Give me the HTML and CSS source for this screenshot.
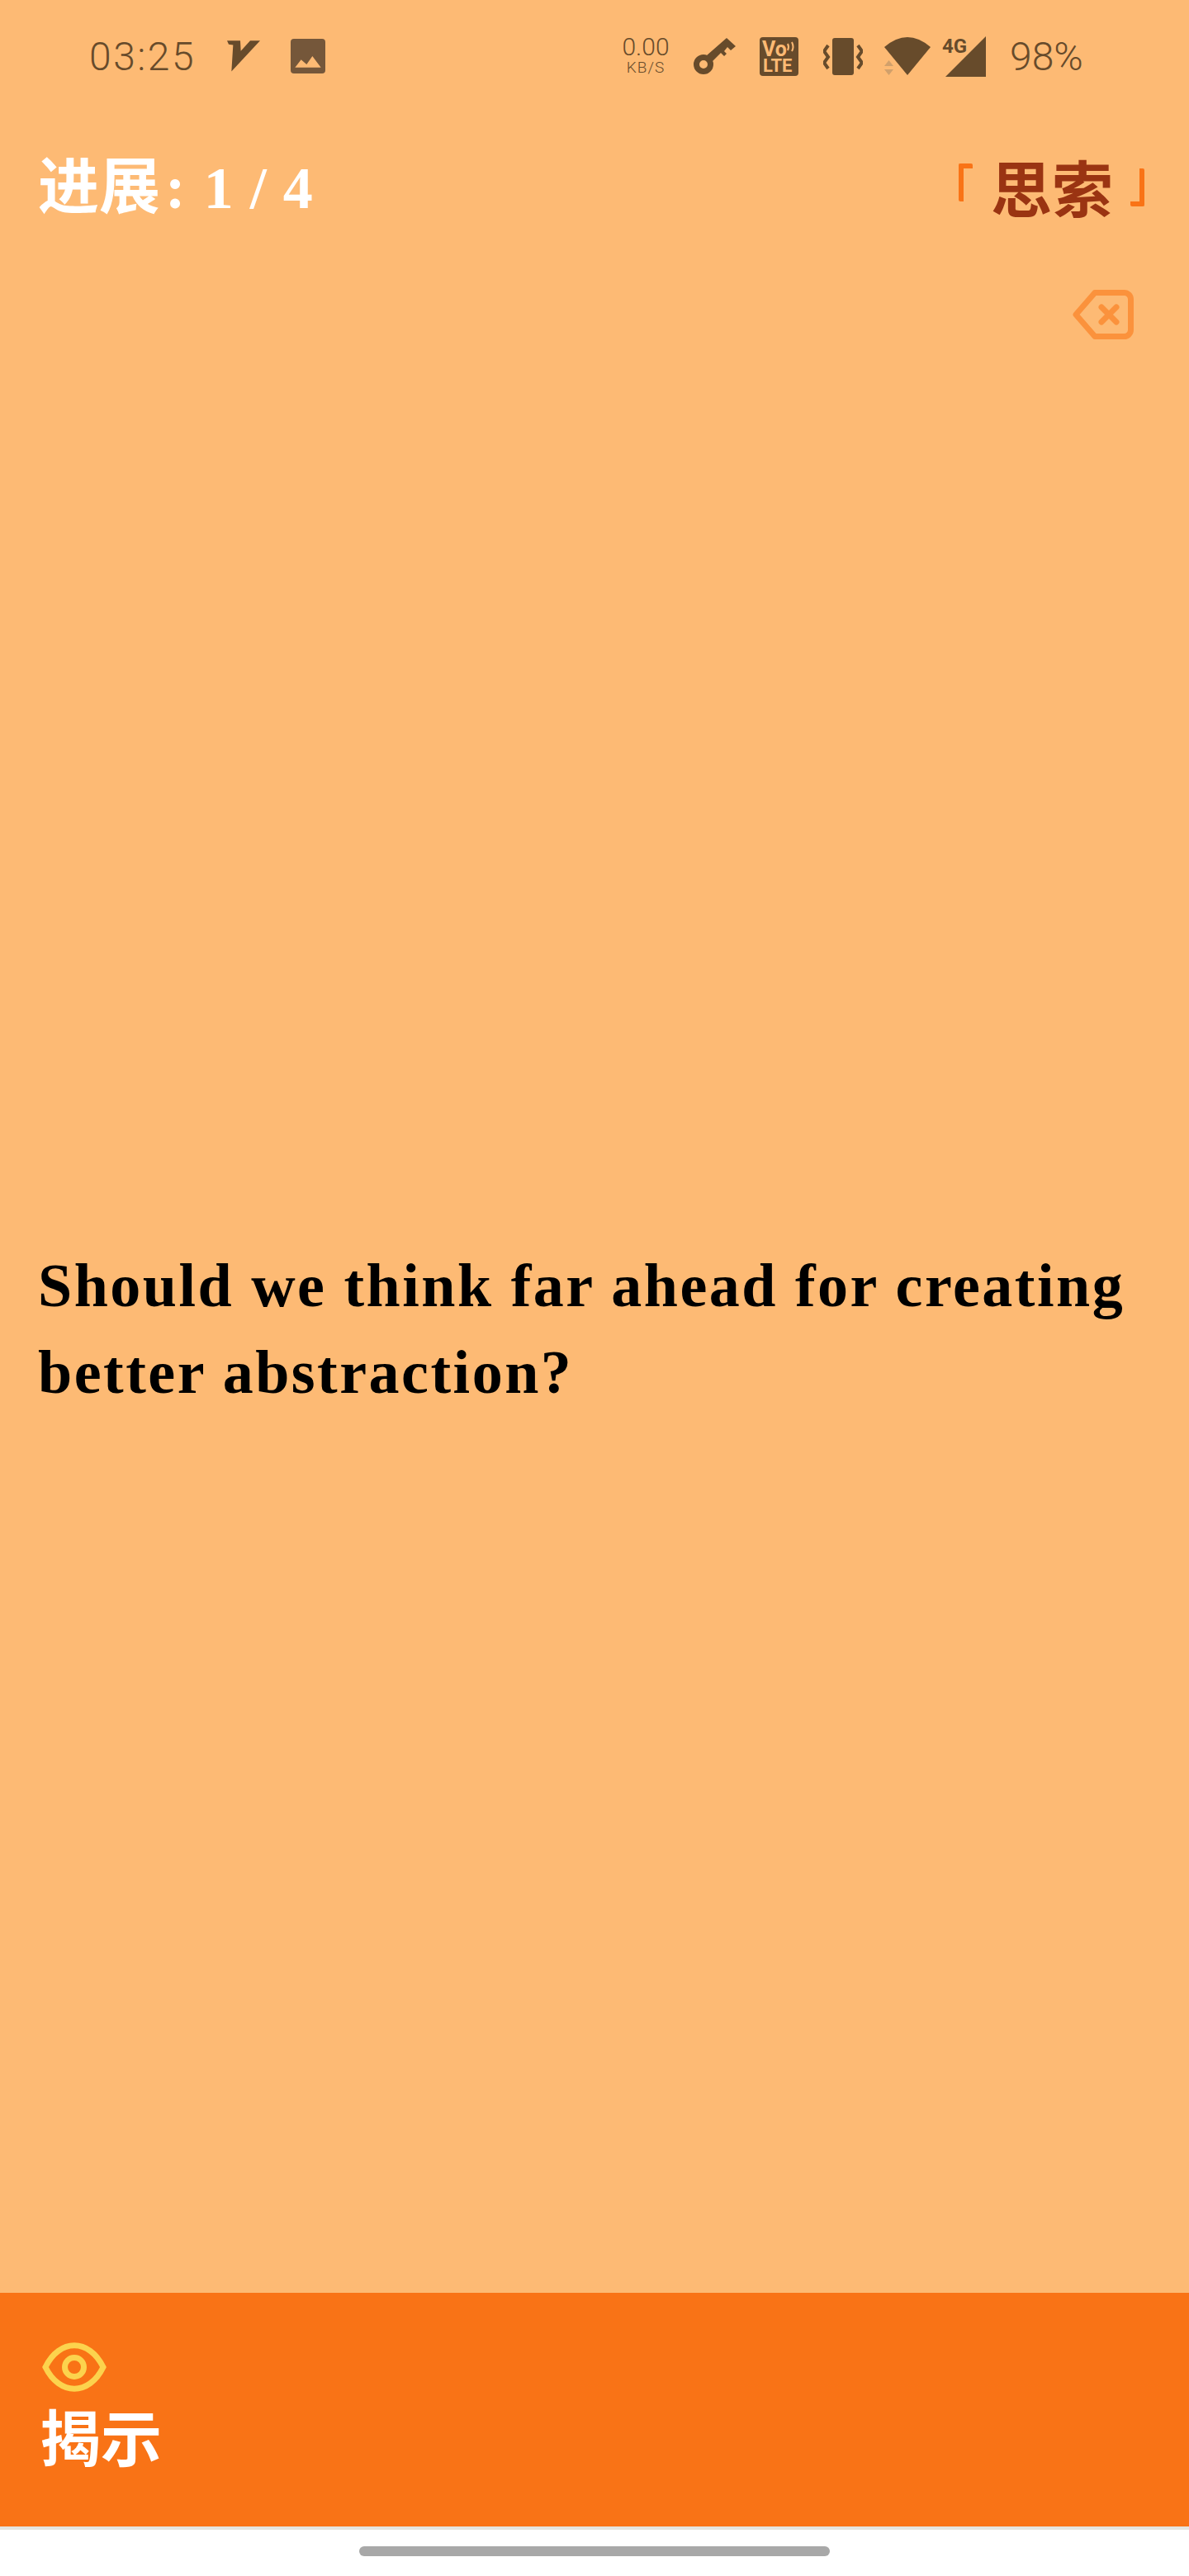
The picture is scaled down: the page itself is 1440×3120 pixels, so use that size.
FILE: index.html
```html
<!DOCTYPE html>
<html lang="zh">
<head>
    <meta charset="utf-8">
    <title>思索</title>
    <link rel="stylesheet" href="styles.css">
</head>
<body>
    <div class="screen">
        <div class="status">
            <span class="time">03:25</span>
            <svg class="ic-v" width="40" height="38" viewBox="556 60 120 113"><polygon points="556,60 604,60 606,98 640,60 676,60 572,172 578,76 562,74"/></svg>
            <svg class="ic-pic" width="42" height="42" viewBox="0 0 126 126"><rect width="126" height="126" rx="12"/><polygon class="cut" points="16,104 38,76 58,93 79,63 110,104"/></svg>
            <div class="speed">
                <span class="speed-num">0.00</span>
                <span class="speed-unit">KB/S</span>
            </div>
            <svg class="ic-key" width="51" height="44" viewBox="840 47 51 44"><circle class="ring" cx="852" cy="79" r="8.500"/><polygon points="856,68 880,47 891,57 885,62 881,58 877,63 880,66 877,69 873,65 863,75"/></svg>
            <svg class="ic-volte" width="47" height="47" viewBox="0 0 47 47"><rect width="47" height="47" rx="4"/><text class="volte"><tspan class="volte-a" x="3" y="23">Vo</tspan><tspan class="volte-b" x="4" y="42">LTE</tspan></text><path class="cut-line" d="M34 8q2 4 0 8M39 6q3 6 0 11"/></svg>
            <svg class="ic-vib" width="48" height="46" viewBox="996 46 48 46"><rect x="1007" y="47" width="26" height="45" rx="3"/><polyline class="wave" points="1002,56 997,63 1002,70 997,77 1002,84"/><polyline class="wave" points="1038,56 1043,63 1038,70 1043,77 1038,84"/></svg>
            <svg class="ic-wifi" width="56" height="46" viewBox="1070 45 56 46"><path d="M1070 57Q1098 33 1126 57L1098 91Z"/><polygon class="faint" points="1075.500,73 1081,80 1070,80"/><polygon class="faint" points="1070,84 1081,84 1075.500,91"/></svg>
            <div class="signal">
                <svg width="54" height="49" viewBox="1140 43 54 49"><polygon points="1193,43 1193,92 1144,92"/></svg>
                <span class="net">4G</span>
            </div>
            <span class="battery">98%</span>
        </div>

        <div class="top">
            <div class="progress">进展<span class="colon">:</span><span class="count">1 / 4</span></div>
            <div class="tag">
                <span class="br-left"></span>
                <span class="tag-text">思索</span>
                <span class="br-right"></span>
            </div>
        </div>

        <div class="actions">
            <svg class="ic-back" width="75" height="60" viewBox="1298 351 75 60"><path d="M1303 381L1326 354.500H1361.500a8 8 0 0 1 8 8V399.500a8 8 0 0 1-8 8H1326Z"/><path d="M1334 372L1352 390M1352 372L1334 390"/></svg>
        </div>

        <div class="main">
            <p class="question">Should we think far ahead for creating better abstraction?</p>
        </div>

        <div class="footer">
            <svg class="ic-eye" width="78" height="60" viewBox="51 2837 78 60"><path d="M55 2867C72 2832 108 2832 125 2867C108 2902 72 2902 55 2867Z"/><circle cx="90" cy="2867" r="11.500"/></svg>
            <div class="reveal">揭示</div>
        </div>

        <div class="nav"><span class="pill"></span></div>
    </div>
</body>
</html>
```
FILE: styles.css
```css
* {
    box-sizing: border-box;
}
body {
    margin: 0;
    background-color: #fdba74;
    font-family: "Liberation Serif", "Noto Sans CJK SC", serif;
}
.screen {
    display: flex;
    flex-direction: column;
    height: 3120px;
}

/* status bar */
.status {
    display: flex;
    align-items: center;
    height: 136px;
    padding-left: 108px;
    color: #674b2b;
    font-family: Roboto, sans-serif;
    font-weight: 300;
}
.status svg {
    display: block;
    flex: none;
    fill: #674b2b;
}
.time {
    width: 128px;
    font-size: 48px;
    letter-spacing: 2.500px;
}
.ic-v {
    margin-left: 39px;
}
.status .ic-pic {
    margin-left: 37px;
    fill: #75573a;
}
.cut {
    fill: #fdba74;
}
.speed {
    display: flex;
    flex-direction: column;
    align-items: center;
    width: 56px;
    margin-left: 360px;
}
.speed-num {
    font-size: 30px;
    line-height: 28px;
}
.speed-unit {
    font-size: 19px;
    line-height: 22px;
    letter-spacing: 1px;
}
.ic-key {
    margin-left: 30px;
}
.status .ring {
    fill: none;
    stroke: #674b2b;
    stroke-width: 7;
}
.ic-volte {
    margin-left: 29px;
}
.status .volte {
    fill: #fdba74;
    font-family: Roboto, sans-serif;
    font-weight: 700;
}
.volte-a {
    font-size: 25px;
}
.volte-b {
    font-size: 22px;
}
.status .cut-line {
    fill: none;
    stroke: #fdba74;
    stroke-width: 2;
}
.ic-vib {
    margin-left: 30px;
}
.status .wave {
    fill: none;
    stroke: #674b2b;
    stroke-width: 4;
}
.ic-wifi {
    margin-left: 26px;
}
.status .faint {
    fill: #d1a06b;
}
.signal {
    position: relative;
    margin-left: 14px;
}
.net {
    position: absolute;
    top: -2px;
    left: 0;
    font-size: 24px;
    font-weight: 700;
    line-height: 28px;
}
.battery {
    margin-left: 28px;
    font-size: 48px;
}

/* header */
.top {
    display: flex;
    justify-content: space-between;
    align-items: center;
    height: 176px;
    padding: 0 54px 0 46px;
}
.progress {
    display: flex;
    align-items: baseline;
    margin-top: -10px;
    color: #fff;
    font-size: 74px;
    font-weight: 700;
    white-space: nowrap;
}
.colon {
    margin-left: 6px;
}
.count {
    margin-left: 22px;
    font-size: 72px;
    letter-spacing: 1px;
}
.tag {
    display: flex;
    align-items: center;
}
.tag-text {
    margin: 0 21px 0 22px;
    color: #9a3412;
    font-size: 74px;
    font-weight: 700;
}
.br-left,
.br-right {
    display: block;
    width: 17px;
    height: 46px;
    border: 0 solid #f97316;
    border-radius: 2px;
}
.br-left {
    margin-top: -6px;
    border-width: 6px 0 0 6px;
}
.br-right {
    margin-top: 6px;
    border-width: 0 6px 6px 0;
}

/* delete icon */
.actions {
    display: flex;
    justify-content: flex-end;
    height: 131px;
    padding: 39px 67px 0 0;
}
.ic-back {
    display: block;
    fill: none;
    stroke: #fb923c;
    stroke-width: 7;
    stroke-linejoin: round;
    stroke-linecap: round;
}

/* question */
.main {
    flex: 1;
    display: flex;
    align-items: center;
    padding: 0 46px;
}
.question {
    margin: 0;
    color: #000;
    font-size: 74px;
    font-weight: 700;
    line-height: 105px;
    letter-spacing: 2.500px;
}

/* bottom bar */
.footer {
    height: 287px;
    padding: 60px 48px 0;
    background-color: #f97316;
    border-bottom: 4px solid #e5e5e0;
}
.ic-eye {
    display: block;
    margin-left: 3px;
    fill: none;
    stroke: #fcd34d;
    stroke-width: 7;
}
.reveal {
    margin-top: 14px;
    color: #fff;
    font-size: 74px;
    font-weight: 700;
    line-height: 90px;
}

/* gesture bar */
.nav {
    display: flex;
    justify-content: center;
    height: 56px;
    padding-top: 20px;
    background-color: #fff;
}
.pill {
    display: block;
    width: 570px;
    height: 12px;
    background-color: #a8a8a8;
    border-radius: 6px;
}
```
